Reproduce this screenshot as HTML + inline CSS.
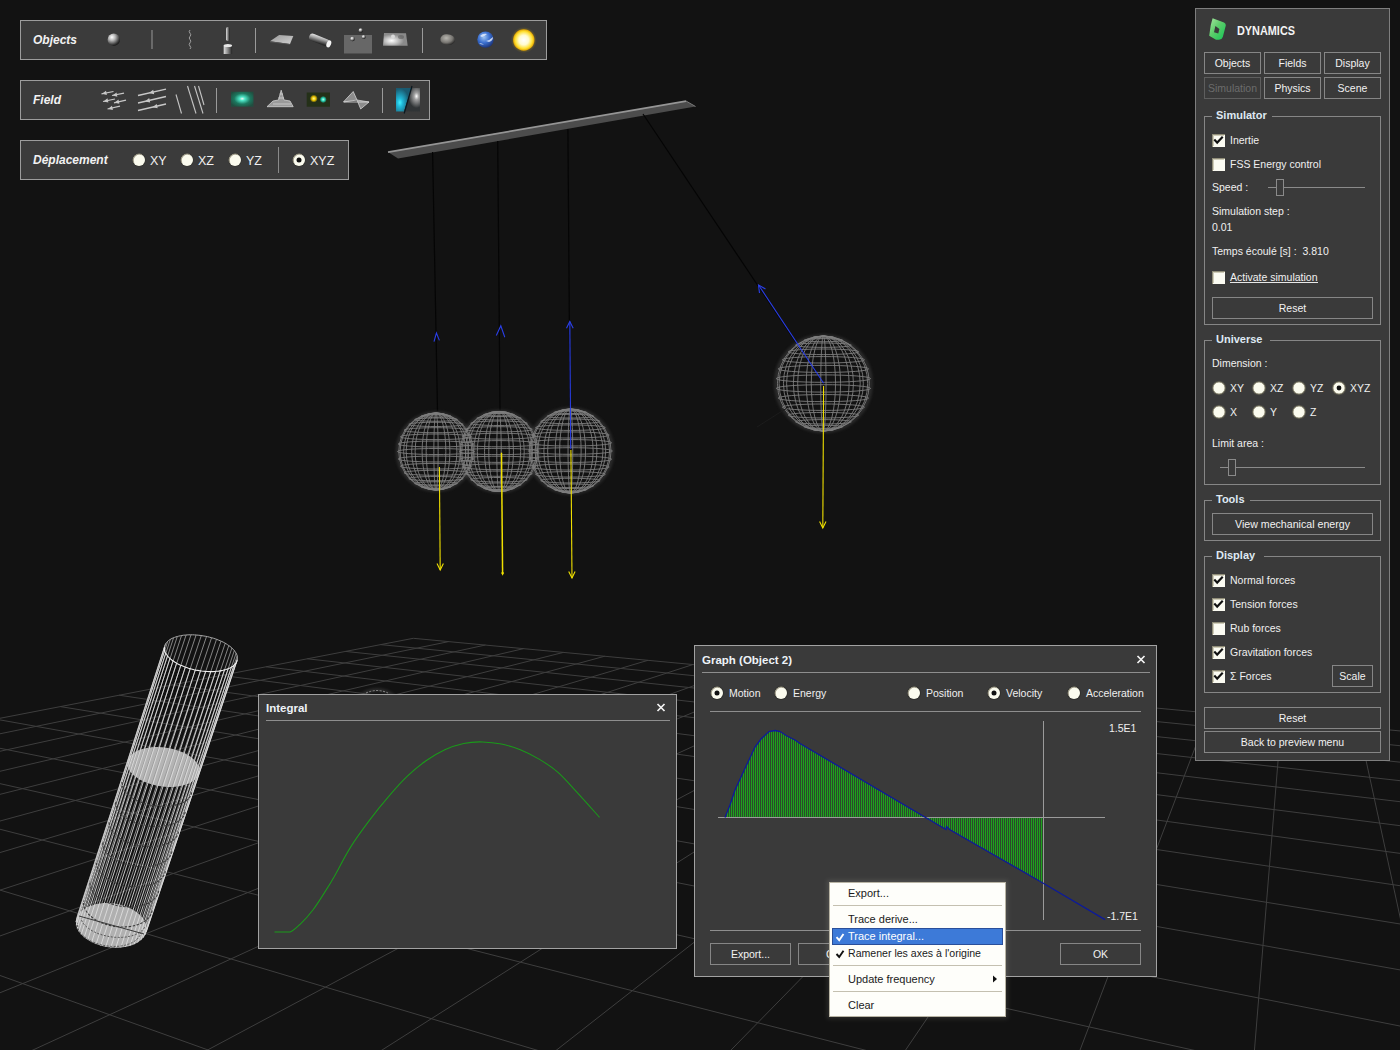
<!DOCTYPE html>
<html><head><meta charset="utf-8">
<style>
*{margin:0;padding:0}
html,body{width:1400px;height:1050px;overflow:hidden;background:#121212}
svg{position:absolute;left:0;top:0;display:block}
text{font-family:"Liberation Sans",sans-serif;white-space:pre}
</style></head><body>
<svg width="1400" height="1050" viewBox="0 0 1400 1050">
<rect width="1400" height="1050" fill="#121212"/>
<path d="M1527.5 742.9L11927.7 13509.7M1440.6 734.7L8031.1 13509.0M1358.8 727.1L4134.6 13508.2M1281.4 719.8L238.1 13507.4M1208.3 712.9L-3658.5 13506.7M1139.0 706.4L-7555.0 13505.9M1073.2 700.2L-5395.7 7313.8M1010.7 694.4L-3692.8 4377.5M951.3 688.8L-3012.0 3203.6M894.7 683.5L-2645.4 2571.6M840.8 678.4L-2416.4 2176.7M789.3 673.6L-2259.7 1906.5M740.1 669.0L-2145.7 1710.0M693.0 664.5L-2059.1 1560.6M648.0 660.3L-1991.1 1443.3M604.8 656.2L-1936.2 1348.7M563.4 652.4L-1891.0 1270.8M523.6 648.6L-1853.2 1205.5M485.4 645.0L-1821.0 1150.0M448.7 641.6L-1793.3 1102.2M413.3 638.3L-1769.2 1060.7M1527.5 742.9L413.3 638.3M1541.1 759.7L380.6 644.6M1556.5 778.6L345.3 651.4M1574.1 800.1L307.3 658.8M1594.2 824.8L266.1 666.8M1617.5 853.4L221.3 675.4M1644.9 887.0L172.5 684.9M1677.5 927.0L119.1 695.2M1716.9 975.4L60.4 706.6M1765.6 1035.2L-4.5 719.1M1827.2 1110.8L-76.5 733.1M1907.7 1209.7L-156.9 748.6M2017.5 1344.4L-247.3 766.1M2175.7 1538.6L-349.6 785.9M2423.8 1843.2L-466.4 808.5M2868.9 2389.6L-600.9 834.6M3899.4 3654.5L-757.6 864.9M8889.7 9780.4L-942.4 900.7M5683.9 13508.5L-1163.7 943.5M-1651.3 13507.1L-1433.3 995.7M-8986.6 13505.7L-1769.2 1060.7" stroke="#3e3e3e" stroke-width="1" fill="none"/>
<path d="M199.3 772.1 L198.9 774.0 L198.0 776.0 L196.7 777.8 L195.1 779.5 L193.2 781.0 L190.9 782.4 L188.3 783.7 L185.4 784.7 L182.3 785.6 L179.0 786.2 L175.5 786.7 L171.9 786.9 L168.2 786.9 L164.5 786.7 L160.7 786.3 L156.9 785.7 L153.3 784.8 L149.7 783.8 L146.3 782.6 L143.1 781.2 L140.1 779.7 L137.3 778.0 L134.9 776.2 L132.7 774.3 L130.9 772.3 L129.5 770.2 L128.4 768.2 L127.7 766.1 L127.4 764.0 L127.5 761.9 L127.9 760.0 L128.8 758.0 L130.1 756.2 L131.7 754.5 L133.6 753.0 L135.9 751.6 L138.5 750.3 L141.4 749.3 L144.5 748.4 L147.8 747.8 L151.3 747.3 L154.9 747.1 L158.6 747.1 L162.3 747.3 L166.1 747.7 L169.9 748.3 L173.5 749.2 L177.1 750.2 L180.5 751.4 L183.7 752.8 L186.7 754.3 L189.5 756.0 L191.9 757.8 L194.1 759.7 L195.9 761.7 L197.3 763.8 L198.4 765.8 L199.1 767.9 L199.4 770.0 L199.3 772.1Z" fill="#b4b4b4"/>
<path d="M146.6 930.4 L146.0 932.6 L145.1 934.8 L143.9 936.8 L142.3 938.8 L140.3 940.6 L138.0 942.2 L135.4 943.7 L132.6 944.9 L129.5 945.9 L126.3 946.7 L122.8 947.3 L119.3 947.7 L115.6 947.7 L111.9 947.6 L108.2 947.2 L104.6 946.5 L101.0 945.7 L97.5 944.6 L94.2 943.3 L91.0 941.8 L88.1 940.1 L85.4 938.3 L83.1 936.3 L81.0 934.2 L79.2 932.0 L77.8 929.7 L76.8 927.4 L76.2 925.1 L75.9 922.7 L76.0 920.4 L76.6 918.2 L77.5 916.0 L78.7 914.0 L80.3 912.0 L82.3 910.2 L84.6 908.6 L87.2 907.1 L90.0 905.9 L93.1 904.9 L96.3 904.1 L99.8 903.5 L103.3 903.1 L107.0 903.1 L110.7 903.2 L114.4 903.6 L118.0 904.3 L121.6 905.1 L125.1 906.2 L128.4 907.5 L131.6 909.0 L134.5 910.7 L137.2 912.5 L139.5 914.5 L141.6 916.6 L143.4 918.8 L144.8 921.1 L145.8 923.4 L146.4 925.7 L146.7 928.1 L146.6 930.4Z" fill="#b0b0b0"/>
<path d="M164.8 645.6L76.4 918.9M165.9 643.3L77.5 915.9M167.8 641.2L79.3 913.1M170.4 639.3L81.8 910.6M173.6 637.7L84.9 908.4M177.3 636.5L88.5 906.5M181.5 635.6L92.6 905.0M186.1 635.0L97.1 903.9M191.0 634.8L101.8 903.3M196.1 635.0L106.8 903.1M201.3 635.6L111.8 903.3M206.5 636.5L116.9 904.0M211.6 637.7L121.8 905.2M216.5 639.3L126.5 906.7M221.0 641.2L130.9 908.7M225.2 643.3L134.9 910.9M228.8 645.6L138.4 913.5M231.9 648.0L141.4 916.3M234.3 650.6L143.7 919.3M236.1 653.2L145.4 922.4M237.2 655.8L146.4 925.6M237.5 658.4L146.7 928.8" stroke="#9a9a9a" stroke-width="0.85" fill="none"/>
<path d="M237.0 660.8L146.2 931.9M235.9 663.1L145.1 934.9M234.0 665.2L143.3 937.7M231.4 667.1L140.8 940.2M228.2 668.7L137.7 942.4M224.5 669.9L134.1 944.3M220.3 670.8L130.0 945.8M215.7 671.4L125.5 946.9M210.8 671.6L120.8 947.5M205.7 671.4L115.8 947.7M200.5 670.8L110.8 947.5M195.3 669.9L105.7 946.8M190.2 668.7L100.8 945.6M185.3 667.1L96.1 944.1M180.8 665.2L91.7 942.1M176.6 663.1L87.7 939.9M173.0 660.8L84.2 937.3M169.9 658.4L81.2 934.5M167.5 655.8L78.9 931.5M165.7 653.2L77.2 928.4M164.6 650.6L76.2 925.2M164.3 648.0L75.9 922.0" stroke="#dedede" stroke-width="0.9" fill="none"/>
<path d="M191.7 792.3 L191.5 793.3 L191.2 794.3 L190.8 795.2 L190.3 796.1 L189.7 797.0 L189.1 797.9 L188.3 798.7 L187.5 799.5 L186.6 800.3 L185.6 801.0 L184.5 801.7 L183.3 802.4 L182.1 803.0 L180.8 803.5 L179.4 804.1 L178.0 804.5 L176.5 804.9 L174.9 805.3 L173.4 805.6 L171.7 805.9 L170.0 806.1 L168.3 806.3 L166.6 806.4 L164.8 806.5 L163.0 806.5 L161.2 806.4 L159.4 806.3 L157.6 806.2 L155.8 805.9 L153.9 805.7 L152.1 805.4 L150.3 805.0 L148.5 804.6 L146.8 804.1 L145.0 803.6 L143.3 803.1 L141.7 802.4 L140.0 801.8 L138.5 801.1 L136.9 800.4 L135.5 799.6 L134.1 798.8 L132.7 798.0 L131.4 797.1 L130.2 796.2 L129.1 795.3 L128.0 794.4 L127.0 793.4 L126.1 792.5 L125.3 791.5 L124.6 790.5 L123.9 789.4 L123.4 788.4 L122.9 787.4 L122.5 786.4 L122.3 785.3 L122.1 784.3 L122.0 783.3 L122.0 782.3 L122.1 781.3" fill="none" stroke="#3a3a3a" stroke-width="1.1" stroke-dasharray="2.5 1.5"/>
<path d="M185.1 812.0 L184.9 813.0 L184.6 814.0 L184.2 815.0 L183.7 815.9 L183.2 816.8 L182.5 817.7 L181.7 818.5 L180.9 819.4 L180.0 820.1 L179.0 820.9 L177.9 821.6 L176.7 822.3 L175.5 822.9 L174.2 823.5 L172.8 824.0 L171.4 824.5 L169.9 824.9 L168.4 825.3 L166.8 825.7 L165.2 825.9 L163.5 826.2 L161.8 826.3 L160.0 826.5 L158.3 826.5 L156.5 826.6 L154.7 826.5 L152.9 826.4 L151.1 826.3 L149.2 826.1 L147.4 825.8 L145.6 825.5 L143.8 825.1 L142.0 824.7 L140.3 824.3 L138.5 823.7 L136.8 823.2 L135.2 822.6 L133.6 821.9 L132.0 821.2 L130.5 820.5 L129.0 819.8 L127.6 819.0 L126.2 818.1 L125.0 817.2 L123.7 816.3 L122.6 815.4 L121.5 814.5 L120.6 813.5 L119.7 812.5 L118.9 811.5 L118.1 810.5 L117.5 809.5 L116.9 808.4 L116.5 807.4 L116.1 806.3 L115.8 805.3 L115.7 804.3 L115.6 803.2 L115.6 802.2 L115.7 801.2" fill="none" stroke="#3a3a3a" stroke-width="1.1" stroke-dasharray="2.5 1.5"/>
<path d="M178.5 831.7 L178.3 832.7 L178.0 833.7 L177.6 834.7 L177.1 835.7 L176.6 836.6 L175.9 837.5 L175.1 838.4 L174.3 839.2 L173.4 840.0 L172.4 840.8 L171.3 841.5 L170.1 842.2 L168.9 842.8 L167.6 843.4 L166.2 844.0 L164.8 844.5 L163.3 844.9 L161.8 845.3 L160.2 845.7 L158.6 846.0 L156.9 846.2 L155.2 846.4 L153.5 846.5 L151.7 846.6 L150.0 846.6 L148.2 846.6 L146.3 846.5 L144.5 846.4 L142.7 846.2 L140.9 845.9 L139.1 845.6 L137.3 845.3 L135.5 844.9 L133.8 844.4 L132.0 843.9 L130.3 843.3 L128.7 842.7 L127.1 842.1 L125.5 841.4 L124.0 840.7 L122.5 839.9 L121.1 839.1 L119.8 838.2 L118.5 837.4 L117.3 836.4 L116.2 835.5 L115.1 834.6 L114.1 833.6 L113.2 832.6 L112.4 831.6 L111.7 830.5 L111.0 829.5 L110.5 828.4 L110.0 827.4 L109.7 826.3 L109.4 825.3 L109.2 824.2 L109.1 823.2 L109.2 822.1 L109.3 821.1" fill="none" stroke="#3a3a3a" stroke-width="1.1" stroke-dasharray="2.5 1.5"/>
<path d="M171.9 851.4 L171.7 852.4 L171.4 853.5 L171.0 854.5 L170.5 855.4 L170.0 856.4 L169.3 857.3 L168.5 858.2 L167.7 859.0 L166.8 859.9 L165.8 860.6 L164.7 861.4 L163.6 862.1 L162.3 862.7 L161.0 863.4 L159.7 863.9 L158.3 864.4 L156.8 864.9 L155.2 865.3 L153.7 865.7 L152.0 866.0 L150.4 866.2 L148.7 866.4 L147.0 866.6 L145.2 866.7 L143.4 866.7 L141.6 866.7 L139.8 866.6 L138.0 866.5 L136.2 866.3 L134.4 866.0 L132.6 865.7 L130.8 865.4 L129.0 865.0 L127.3 864.5 L125.5 864.0 L123.8 863.5 L122.2 862.9 L120.6 862.2 L119.0 861.5 L117.5 860.8 L116.0 860.0 L114.6 859.2 L113.3 858.3 L112.0 857.5 L110.8 856.5 L109.7 855.6 L108.6 854.6 L107.7 853.6 L106.8 852.6 L106.0 851.6 L105.2 850.6 L104.6 849.5 L104.1 848.4 L103.6 847.4 L103.2 846.3 L103.0 845.2 L102.8 844.2 L102.7 843.1 L102.7 842.0 L102.8 841.0" fill="none" stroke="#3a3a3a" stroke-width="1.1" stroke-dasharray="2.5 1.5"/>
<path d="M165.3 871.1 L165.1 872.2 L164.8 873.2 L164.4 874.2 L163.9 875.2 L163.4 876.2 L162.7 877.1 L161.9 878.0 L161.1 878.9 L160.2 879.7 L159.2 880.5 L158.1 881.3 L157.0 882.0 L155.7 882.7 L154.5 883.3 L153.1 883.9 L151.7 884.4 L150.2 884.9 L148.7 885.3 L147.1 885.7 L145.5 886.0 L143.8 886.3 L142.1 886.5 L140.4 886.7 L138.7 886.8 L136.9 886.8 L135.1 886.8 L133.3 886.7 L131.5 886.6 L129.7 886.4 L127.9 886.2 L126.1 885.9 L124.3 885.5 L122.5 885.1 L120.8 884.7 L119.0 884.2 L117.4 883.6 L115.7 883.0 L114.1 882.3 L112.5 881.6 L111.0 880.9 L109.6 880.1 L108.2 879.3 L106.8 878.5 L105.6 877.6 L104.4 876.6 L103.2 875.7 L102.2 874.7 L101.2 873.7 L100.3 872.7 L99.5 871.7 L98.8 870.6 L98.2 869.5 L97.6 868.5 L97.2 867.4 L96.8 866.3 L96.5 865.2 L96.4 864.1 L96.3 863.0 L96.3 862.0 L96.4 860.9" fill="none" stroke="#3a3a3a" stroke-width="1.1" stroke-dasharray="2.5 1.5"/>
<path d="M158.7 890.8 L158.5 891.9 L158.2 892.9 L157.8 894.0 L157.3 895.0 L156.8 895.9 L156.1 896.9 L155.3 897.8 L154.5 898.7 L153.6 899.6 L152.6 900.4 L151.5 901.2 L150.4 901.9 L149.2 902.6 L147.9 903.2 L146.5 903.8 L145.1 904.4 L143.6 904.9 L142.1 905.3 L140.5 905.7 L138.9 906.0 L137.3 906.3 L135.6 906.6 L133.9 906.7 L132.1 906.8 L130.3 906.9 L128.6 906.9 L126.8 906.8 L125.0 906.7 L123.2 906.5 L121.3 906.3 L119.6 906.0 L117.8 905.7 L116.0 905.3 L114.3 904.8 L112.6 904.3 L110.9 903.7 L109.2 903.1 L107.6 902.5 L106.1 901.8 L104.6 901.0 L103.1 900.3 L101.7 899.4 L100.4 898.6 L99.1 897.7 L97.9 896.7 L96.8 895.8 L95.7 894.8 L94.8 893.8 L93.9 892.8 L93.1 891.7 L92.4 890.6 L91.7 889.6 L91.2 888.5 L90.7 887.4 L90.4 886.3 L90.1 885.2 L89.9 884.1 L89.8 883.0 L89.9 881.9 L90.0 880.8" fill="none" stroke="#3a3a3a" stroke-width="1.1" stroke-dasharray="2.5 1.5"/>
<path d="M152.1 910.5 L151.9 911.6 L151.6 912.7 L151.2 913.7 L150.7 914.7 L150.2 915.7 L149.5 916.7 L148.8 917.6 L147.9 918.5 L147.0 919.4 L146.0 920.3 L144.9 921.0 L143.8 921.8 L142.6 922.5 L141.3 923.2 L140.0 923.8 L138.5 924.3 L137.1 924.9 L135.6 925.3 L134.0 925.7 L132.4 926.1 L130.7 926.4 L129.0 926.6 L127.3 926.8 L125.6 926.9 L123.8 927.0 L122.0 927.0 L120.2 926.9 L118.4 926.8 L116.6 926.6 L114.8 926.4 L113.0 926.1 L111.3 925.8 L109.5 925.4 L107.8 924.9 L106.1 924.4 L104.4 923.9 L102.8 923.3 L101.2 922.6 L99.6 921.9 L98.1 921.2 L96.6 920.4 L95.3 919.6 L93.9 918.7 L92.7 917.8 L91.5 916.8 L90.3 915.9 L89.3 914.9 L88.3 913.9 L87.4 912.8 L86.6 911.8 L85.9 910.7 L85.3 909.6 L84.7 908.5 L84.3 907.4 L83.9 906.2 L83.7 905.1 L83.5 904.0 L83.4 902.9 L83.4 901.8 L83.5 900.7" fill="none" stroke="#3a3a3a" stroke-width="1.1" stroke-dasharray="2.5 1.5"/>
<path d="M237.3 659.6 L237.1 660.5 L236.8 661.4 L236.4 662.2 L235.9 663.1 L235.3 663.9 L234.6 664.6 L233.8 665.4 L233.0 666.1 L232.0 666.7 L230.9 667.4 L229.8 668.0 L228.6 668.5 L227.3 669.0 L225.9 669.5 L224.5 669.9 L223.0 670.3 L221.5 670.6 L219.9 670.9 L218.2 671.2 L216.5 671.3 L214.7 671.5 L212.9 671.6 L211.1 671.6 L209.3 671.6 L207.4 671.5 L205.5 671.4 L203.6 671.2 L201.7 671.0 L199.8 670.7 L197.9 670.4 L196.0 670.1 L194.1 669.7 L192.2 669.2 L190.4 668.7 L188.5 668.2 L186.7 667.6 L185.0 667.0 L183.3 666.3 L181.6 665.6 L180.0 664.9 L178.5 664.2 L177.0 663.4 L175.6 662.6 L174.3 661.7 L173.0 660.8 L171.8 660.0 L170.7 659.1 L169.6 658.1 L168.7 657.2 L167.8 656.3 L167.1 655.3 L166.4 654.3 L165.8 653.4 L165.3 652.4 L164.9 651.5 L164.6 650.5 L164.4 649.6 L164.3 648.6 L164.4 647.7 L164.5 646.8" fill="none" stroke="#f0f0f0" stroke-width="1.1"/>
<path d="M164.5 646.8 L164.7 645.9 L165.0 645.0 L165.4 644.2 L165.9 643.3 L166.5 642.5 L167.2 641.8 L168.0 641.0 L168.8 640.3 L169.8 639.7 L170.9 639.0 L172.0 638.4 L173.2 637.9 L174.5 637.4 L175.9 636.9 L177.3 636.5 L178.8 636.1 L180.3 635.8 L181.9 635.5 L183.6 635.2 L185.3 635.1 L187.1 634.9 L188.9 634.8 L190.7 634.8 L192.5 634.8 L194.4 634.9 L196.3 635.0 L198.2 635.2 L200.1 635.4 L202.0 635.7 L203.9 636.0 L205.8 636.3 L207.7 636.7 L209.6 637.2 L211.4 637.7 L213.3 638.2 L215.1 638.8 L216.8 639.4 L218.5 640.1 L220.2 640.8 L221.8 641.5 L223.3 642.2 L224.8 643.0 L226.2 643.8 L227.5 644.7 L228.8 645.6 L230.0 646.4 L231.1 647.3 L232.2 648.3 L233.1 649.2 L234.0 650.1 L234.7 651.1 L235.4 652.1 L236.0 653.0 L236.5 654.0 L236.9 654.9 L237.2 655.9 L237.4 656.8 L237.5 657.8 L237.4 658.7 L237.3 659.6" fill="none" stroke="#a8a8a8" stroke-width="1"/>
<path d="M144.6 927.3 L144.2 928.1 L143.7 928.8 L143.1 929.5 L142.5 930.1 L141.8 930.8 L141.0 931.4 L140.2 932.0 L139.4 932.6 L138.5 933.1 L137.5 933.7 L136.5 934.1 L135.4 934.6 L134.3 935.0 L133.1 935.4 L131.9 935.8 L130.7 936.1 L129.4 936.4 L128.1 936.6 L126.8 936.9 L125.4 937.1 L124.0 937.2 L122.6 937.3 L121.2 937.4 L119.7 937.4 L118.3 937.4 L116.8 937.4 L115.3 937.3 L113.8 937.2 L112.3 937.0 L110.9 936.8 L109.4 936.6 L107.9 936.3 L106.4 936.0 L105.0 935.7 L103.6 935.3 L102.2 934.9 L100.8 934.5 L99.4 934.0 L98.1 933.6 L96.8 933.0 L95.5 932.5 L94.3 931.9 L93.1 931.3 L92.0 930.7 L90.9 930.0 L89.8 929.3 L88.8 928.6 L87.9 927.9 L87.0 927.2 L86.1 926.4 L85.3 925.7 L84.6 924.9 L83.9 924.1 L83.3 923.3 L82.8 922.5 L82.3 921.7 L81.9 920.9 L81.5 920.0 L81.2 919.2 L81.0 918.4" fill="none" stroke="#555" stroke-width="1" stroke-dasharray="2 1.5"/>
<path d="M141.0 931.9 L140.8 932.8 L140.6 933.8 L140.2 934.7 L139.8 935.6 L139.3 936.5 L138.7 937.4 L138.0 938.2 L137.2 939.0 L136.4 939.8 L135.5 940.5 L134.5 941.2 L133.4 941.9 L132.3 942.5 L131.1 943.1 L129.9 943.6 L128.6 944.1 L127.2 944.6 L125.8 945.0 L124.4 945.4 L122.9 945.7 L121.4 945.9 L119.8 946.1 L118.2 946.3 L116.6 946.4 L115.0 946.4 L113.4 946.4 L111.7 946.4 L110.0 946.3 L108.4 946.1 L106.7 945.9 L105.0 945.7 L103.4 945.4 L101.8 945.0 L100.2 944.6 L98.6 944.1 L97.0 943.6 L95.5 943.1 L94.0 942.5 L92.6 941.9 L91.2 941.2 L89.8 940.5 L88.5 939.8 L87.3 939.0 L86.1 938.2 L85.0 937.3 L84.0 936.5 L83.0 935.6 L82.1 934.7 L81.3 933.7 L80.5 932.8 L79.8 931.8 L79.3 930.9 L78.7 929.9 L78.3 928.9 L78.0 927.9 L77.7 926.9 L77.6 925.9 L77.5 924.9 L77.5 923.9 L77.6 922.9" fill="none" stroke="#555" stroke-width="1" stroke-dasharray="2 1.5"/>
<path d="M388 152 L686 101 L695.5 106.5 L398 158.5 Z" fill="#4c4c4c"/>
<path d="M388 152.2 L686 101.2" stroke="#959595" stroke-width="1.8"/>
<path d="M686 101 L695.5 106.5" stroke="#7a7a7a" stroke-width="1"/>
<path d="M432.6 152 L437.5 411 M497.7 141 L500 410 M567.9 129 L570 409 M643 114 L823.4 383.5" stroke="#050505" stroke-width="1.2"/>
<defs><filter id="blur2" x="-20%" y="-20%" width="140%" height="140%"><feGaussianBlur stdDeviation="1.5"/></filter></defs>
<circle cx="436" cy="451.5" r="38.5" fill="none" stroke="#606060" stroke-width="3" opacity="0.4" filter="url(#blur2)"/>
<path d="M428.5 413.9A7.5 0.59 0 0 0 443.5 413.9A7.5 0.59 0 0 0 428.5 413.9M421.3 416.0A14.7 1.16 0 0 0 450.7 416.0A14.7 1.16 0 0 0 421.3 416.0M414.6 419.6A21.4 1.68 0 0 0 457.4 419.6A21.4 1.68 0 0 0 414.6 419.6M408.8 424.4A27.2 2.14 0 0 0 463.2 424.4A27.2 2.14 0 0 0 408.8 424.4M404.0 430.2A32.0 2.51 0 0 0 468.0 430.2A32.0 2.51 0 0 0 404.0 430.2M400.4 436.8A35.6 2.79 0 0 0 471.6 436.8A35.6 2.79 0 0 0 400.4 436.8M398.2 444.0A37.8 2.96 0 0 0 473.8 444.0A37.8 2.96 0 0 0 398.2 444.0M397.5 451.5A38.5 3.02 0 0 0 474.5 451.5A38.5 3.02 0 0 0 397.5 451.5M398.2 459.0A37.8 2.96 0 0 0 473.8 459.0A37.8 2.96 0 0 0 398.2 459.0M400.4 466.2A35.6 2.79 0 0 0 471.6 466.2A35.6 2.79 0 0 0 400.4 466.2M404.0 472.8A32.0 2.51 0 0 0 468.0 472.8A32.0 2.51 0 0 0 404.0 472.8M408.8 478.6A27.2 2.14 0 0 0 463.2 478.6A27.2 2.14 0 0 0 408.8 478.6M414.6 483.4A21.4 1.68 0 0 0 457.4 483.4A21.4 1.68 0 0 0 414.6 483.4M421.3 487.0A14.7 1.16 0 0 0 450.7 487.0A14.7 1.16 0 0 0 421.3 487.0M428.5 489.1A7.5 0.59 0 0 0 443.5 489.1A7.5 0.59 0 0 0 428.5 489.1M436.0 413.0A37.22 38.5 0 0 0 436.0 490.0A37.22 38.5 0 0 0 436.0 413.0M436.0 413.0A32.36 38.5 0 0 0 436.0 490.0A32.36 38.5 0 0 0 436.0 413.0M436.0 413.0A24.33 38.5 0 0 0 436.0 490.0A24.33 38.5 0 0 0 436.0 413.0M436.0 413.0A13.92 38.5 0 0 0 436.0 490.0A13.92 38.5 0 0 0 436.0 413.0M436.0 413.0A2.15 38.5 0 0 0 436.0 490.0A2.15 38.5 0 0 0 436.0 413.0M436.0 413.0A9.83 38.5 0 0 0 436.0 490.0A9.83 38.5 0 0 0 436.0 413.0M436.0 413.0A20.86 38.5 0 0 0 436.0 490.0A20.86 38.5 0 0 0 436.0 413.0M436.0 413.0A29.84 38.5 0 0 0 436.0 490.0A29.84 38.5 0 0 0 436.0 413.0M436.0 413.0A35.89 38.5 0 0 0 436.0 490.0A35.89 38.5 0 0 0 436.0 413.0" fill="none" stroke="#7e7e7e" stroke-width="0.9"/>
<circle cx="499" cy="451.5" r="40" fill="none" stroke="#606060" stroke-width="3" opacity="0.4" filter="url(#blur2)"/>
<path d="M491.2 412.4A7.8 0.61 0 0 0 506.8 412.4A7.8 0.61 0 0 0 491.2 412.4M483.7 414.7A15.3 1.20 0 0 0 514.3 414.7A15.3 1.20 0 0 0 483.7 414.7M476.8 418.3A22.2 1.74 0 0 0 521.2 418.3A22.2 1.74 0 0 0 476.8 418.3M470.7 423.3A28.3 2.22 0 0 0 527.3 423.3A28.3 2.22 0 0 0 470.7 423.3M465.7 429.3A33.3 2.61 0 0 0 532.3 429.3A33.3 2.61 0 0 0 465.7 429.3M462.0 436.2A37.0 2.90 0 0 0 536.0 436.2A37.0 2.90 0 0 0 462.0 436.2M459.8 443.7A39.2 3.08 0 0 0 538.2 443.7A39.2 3.08 0 0 0 459.8 443.7M459.0 451.5A40.0 3.14 0 0 0 539.0 451.5A40.0 3.14 0 0 0 459.0 451.5M459.8 459.3A39.2 3.08 0 0 0 538.2 459.3A39.2 3.08 0 0 0 459.8 459.3M462.0 466.8A37.0 2.90 0 0 0 536.0 466.8A37.0 2.90 0 0 0 462.0 466.8M465.7 473.7A33.3 2.61 0 0 0 532.3 473.7A33.3 2.61 0 0 0 465.7 473.7M470.7 479.7A28.3 2.22 0 0 0 527.3 479.7A28.3 2.22 0 0 0 470.7 479.7M476.8 484.7A22.2 1.74 0 0 0 521.2 484.7A22.2 1.74 0 0 0 476.8 484.7M483.7 488.3A15.3 1.20 0 0 0 514.3 488.3A15.3 1.20 0 0 0 483.7 488.3M491.2 490.6A7.8 0.61 0 0 0 506.8 490.6A7.8 0.61 0 0 0 491.2 490.6M499.0 411.5A38.67 40.0 0 0 0 499.0 491.5A38.67 40.0 0 0 0 499.0 411.5M499.0 411.5A33.62 40.0 0 0 0 499.0 491.5A33.62 40.0 0 0 0 499.0 411.5M499.0 411.5A25.28 40.0 0 0 0 499.0 491.5A25.28 40.0 0 0 0 499.0 411.5M499.0 411.5A14.46 40.0 0 0 0 499.0 491.5A14.46 40.0 0 0 0 499.0 411.5M499.0 411.5A2.23 40.0 0 0 0 499.0 491.5A2.23 40.0 0 0 0 499.0 411.5M499.0 411.5A10.22 40.0 0 0 0 499.0 491.5A10.22 40.0 0 0 0 499.0 411.5M499.0 411.5A21.67 40.0 0 0 0 499.0 491.5A21.67 40.0 0 0 0 499.0 411.5M499.0 411.5A31.00 40.0 0 0 0 499.0 491.5A31.00 40.0 0 0 0 499.0 411.5M499.0 411.5A37.29 40.0 0 0 0 499.0 491.5A37.29 40.0 0 0 0 499.0 411.5" fill="none" stroke="#7e7e7e" stroke-width="0.9"/>
<circle cx="570.4" cy="451" r="42" fill="none" stroke="#606060" stroke-width="3" opacity="0.4" filter="url(#blur2)"/>
<path d="M562.2 409.9A8.2 0.64 0 0 0 578.6 409.9A8.2 0.64 0 0 0 562.2 409.9M554.3 412.3A16.1 1.26 0 0 0 586.5 412.3A16.1 1.26 0 0 0 554.3 412.3M547.1 416.2A23.3 1.83 0 0 0 593.7 416.2A23.3 1.83 0 0 0 547.1 416.2M540.7 421.4A29.7 2.33 0 0 0 600.1 421.4A29.7 2.33 0 0 0 540.7 421.4M535.5 427.7A34.9 2.74 0 0 0 605.3 427.7A34.9 2.74 0 0 0 535.5 427.7M531.6 435.0A38.8 3.04 0 0 0 609.2 435.0A38.8 3.04 0 0 0 531.6 435.0M529.2 442.8A41.2 3.23 0 0 0 611.6 442.8A41.2 3.23 0 0 0 529.2 442.8M528.4 451.0A42.0 3.30 0 0 0 612.4 451.0A42.0 3.30 0 0 0 528.4 451.0M529.2 459.2A41.2 3.23 0 0 0 611.6 459.2A41.2 3.23 0 0 0 529.2 459.2M531.6 467.0A38.8 3.04 0 0 0 609.2 467.0A38.8 3.04 0 0 0 531.6 467.0M535.5 474.3A34.9 2.74 0 0 0 605.3 474.3A34.9 2.74 0 0 0 535.5 474.3M540.7 480.6A29.7 2.33 0 0 0 600.1 480.6A29.7 2.33 0 0 0 540.7 480.6M547.1 485.8A23.3 1.83 0 0 0 593.7 485.8A23.3 1.83 0 0 0 547.1 485.8M554.3 489.7A16.1 1.26 0 0 0 586.5 489.7A16.1 1.26 0 0 0 554.3 489.7M562.2 492.1A8.2 0.64 0 0 0 578.6 492.1A8.2 0.64 0 0 0 562.2 492.1M570.4 409.0A40.61 42.0 0 0 0 570.4 493.0A40.61 42.0 0 0 0 570.4 409.0M570.4 409.0A35.30 42.0 0 0 0 570.4 493.0A35.30 42.0 0 0 0 570.4 409.0M570.4 409.0A26.55 42.0 0 0 0 570.4 493.0A26.55 42.0 0 0 0 570.4 409.0M570.4 409.0A15.19 42.0 0 0 0 570.4 493.0A15.19 42.0 0 0 0 570.4 409.0M570.4 409.0A2.34 42.0 0 0 0 570.4 493.0A2.34 42.0 0 0 0 570.4 409.0M570.4 409.0A10.73 42.0 0 0 0 570.4 493.0A10.73 42.0 0 0 0 570.4 409.0M570.4 409.0A22.75 42.0 0 0 0 570.4 493.0A22.75 42.0 0 0 0 570.4 409.0M570.4 409.0A32.55 42.0 0 0 0 570.4 493.0A32.55 42.0 0 0 0 570.4 409.0M570.4 409.0A39.16 42.0 0 0 0 570.4 493.0A39.16 42.0 0 0 0 570.4 409.0" fill="none" stroke="#7e7e7e" stroke-width="0.9"/>
<circle cx="823.4" cy="383.5" r="47.5" fill="none" stroke="#606060" stroke-width="3" opacity="0.4" filter="url(#blur2)"/>
<path d="M813.5 337.2A9.9 0.77 0 0 0 833.3 337.2A9.9 0.77 0 0 0 813.5 337.2M804.1 340.2A19.3 1.52 0 0 0 842.7 340.2A19.3 1.52 0 0 0 804.1 340.2M795.5 345.2A27.9 2.19 0 0 0 851.3 345.2A27.9 2.19 0 0 0 795.5 345.2M788.1 351.8A35.3 2.77 0 0 0 858.7 351.8A35.3 2.77 0 0 0 788.1 351.8M782.3 359.8A41.1 3.23 0 0 0 864.5 359.8A41.1 3.23 0 0 0 782.3 359.8M778.2 368.9A45.2 3.54 0 0 0 868.6 368.9A45.2 3.54 0 0 0 778.2 368.9M776.2 378.6A47.2 3.71 0 0 0 870.6 378.6A47.2 3.71 0 0 0 776.2 378.6M776.2 388.4A47.2 3.71 0 0 0 870.6 388.4A47.2 3.71 0 0 0 776.2 388.4M778.2 398.1A45.2 3.54 0 0 0 868.6 398.1A45.2 3.54 0 0 0 778.2 398.1M782.3 407.2A41.1 3.23 0 0 0 864.5 407.2A41.1 3.23 0 0 0 782.3 407.2M788.1 415.2A35.3 2.77 0 0 0 858.7 415.2A35.3 2.77 0 0 0 788.1 415.2M795.5 421.8A27.9 2.19 0 0 0 851.3 421.8A27.9 2.19 0 0 0 795.5 421.8M804.1 426.8A19.3 1.52 0 0 0 842.7 426.8A19.3 1.52 0 0 0 804.1 426.8M813.5 429.8A9.9 0.77 0 0 0 833.3 429.8A9.9 0.77 0 0 0 813.5 429.8M823.4 336.0A45.92 47.5 0 0 0 823.4 431.0A45.92 47.5 0 0 0 823.4 336.0M823.4 336.0A39.93 47.5 0 0 0 823.4 431.0A39.93 47.5 0 0 0 823.4 336.0M823.4 336.0A30.02 47.5 0 0 0 823.4 431.0A30.02 47.5 0 0 0 823.4 336.0M823.4 336.0A17.18 47.5 0 0 0 823.4 431.0A17.18 47.5 0 0 0 823.4 336.0M823.4 336.0A2.65 47.5 0 0 0 823.4 431.0A2.65 47.5 0 0 0 823.4 336.0M823.4 336.0A12.13 47.5 0 0 0 823.4 431.0A12.13 47.5 0 0 0 823.4 336.0M823.4 336.0A25.73 47.5 0 0 0 823.4 431.0A25.73 47.5 0 0 0 823.4 336.0M823.4 336.0A36.81 47.5 0 0 0 823.4 431.0A36.81 47.5 0 0 0 823.4 336.0M823.4 336.0A44.29 47.5 0 0 0 823.4 431.0A44.29 47.5 0 0 0 823.4 336.0" fill="none" stroke="#7e7e7e" stroke-width="0.9"/>
<path d="M439.4 467 L440.2 570" stroke="#f0e000" stroke-width="1.1"/>
<path d="M437.0 563.6 L440.2 570 L443.4 563.6" fill="none" stroke="#f0e000" stroke-width="1.1"/>
<path d="M501.5 452.7 L502.6 574" stroke="#f0e000" stroke-width="1.5"/>
<path d="M501.8 572.4 L502.6 574 L503.4 572.4" fill="none" stroke="#f0e000" stroke-width="1.5"/>
<path d="M570.9 450 L572 578" stroke="#f0e000" stroke-width="1.1"/>
<path d="M568.7 571.6 L572 578 L575.1 571.6" fill="none" stroke="#f0e000" stroke-width="1.1"/>
<path d="M823.6 386 L822.8 528" stroke="#f0e000" stroke-width="1.1"/>
<path d="M819.6 521.6 L822.8 528 L826.0 521.6" fill="none" stroke="#f0e000" stroke-width="1.1"/>
<path d="M823.6 383.2 L758.5 285" stroke="#2a3fe8" stroke-width="1.1"/>
<path d="M765.5 289.0 L758.5 285 L759.5 293.0" fill="none" stroke="#2a3fe8" stroke-width="1.1"/>
<path d="M570.7 448.7 L569.8 321.5" stroke="#2a3fe8" stroke-width="1.1"/>
<path d="M573.2 328.2 L569.8 321.5 L566.5 328.2" fill="none" stroke="#2a3fe8" stroke-width="1.1"/>
<path d="M434 341.6 L436.4 333 L439.4 340.4 M496.3 335.5 L500.8 325.8 L504.8 337.3" fill="none" stroke="#2a3fe8" stroke-width="1.1"/>
<ellipse cx="377" cy="712" rx="24" ry="22" fill="none" stroke="#707070" stroke-width="3" opacity="0.35" filter="url(#blur2)"/>
<path d="M366 693 Q377 688 388 693" fill="none" stroke="#8a8a8a" stroke-width="1" stroke-dasharray="2 1.5"/>
<path d="M79 916 L144 934" stroke="#3a3a3a" stroke-width="1"/>
<path d="M757 427 L790 406" stroke="#1c1c1c" stroke-width="1"/>
<rect x="20.5" y="20.5" width="526" height="39" fill="#3b3b3b" stroke="#9c9c9c" stroke-width="1" />
<rect x="20.5" y="80.5" width="409" height="39" fill="#3b3b3b" stroke="#9c9c9c" stroke-width="1" />
<rect x="20.5" y="140.5" width="328" height="39" fill="#3b3b3b" stroke="#9c9c9c" stroke-width="1" />
<text x="33" y="44" font-size="12" fill="#f2f2f2" font-weight="bold" font-style="italic">Objects</text>
<text x="33" y="104" font-size="12" fill="#f2f2f2" font-weight="bold" font-style="italic">Field</text>
<text x="33" y="164" font-size="12" fill="#f2f2f2" font-weight="bold" font-style="italic">Déplacement</text>
<defs>
<radialGradient id="gSph" cx="0.35" cy="0.3" r="0.75"><stop offset="0" stop-color="#ffffff"/><stop offset="0.35" stop-color="#b8b8b8"/><stop offset="0.8" stop-color="#3a3a3a"/><stop offset="1" stop-color="#111"/></radialGradient>
<linearGradient id="gPlane" x1="0" y1="0" x2="1" y2="1"><stop offset="0" stop-color="#9a9a9a"/><stop offset="1" stop-color="#cfcfcf"/></linearGradient>
<linearGradient id="gCyl" x1="0" y1="0" x2="0.3" y2="1"><stop offset="0" stop-color="#f0f0f0"/><stop offset="0.45" stop-color="#a0a0a0"/><stop offset="1" stop-color="#2a2a2a"/></linearGradient>
<linearGradient id="gRod" x1="0" y1="0" x2="1" y2="0"><stop offset="0" stop-color="#dddddd"/><stop offset="0.5" stop-color="#888"/><stop offset="1" stop-color="#222"/></linearGradient>
<radialGradient id="gTer" cx="0.35" cy="0.6" r="0.5"><stop offset="0" stop-color="#ffffff"/><stop offset="1" stop-color="#8a8a8a"/></radialGradient>
<radialGradient id="gRock" cx="0.4" cy="0.35" r="0.7"><stop offset="0" stop-color="#b8b6b0"/><stop offset="0.6" stop-color="#7a7874"/><stop offset="1" stop-color="#202020"/></radialGradient>
<radialGradient id="gEarth" cx="0.4" cy="0.35" r="0.7"><stop offset="0" stop-color="#9fc4f0"/><stop offset="0.5" stop-color="#3a6fd0"/><stop offset="1" stop-color="#1a2f70"/></radialGradient>
<radialGradient id="gSun" cx="0.5" cy="0.5" r="0.5"><stop offset="0" stop-color="#ffffff"/><stop offset="0.45" stop-color="#fffbd0"/><stop offset="0.8" stop-color="#ffe030"/><stop offset="1" stop-color="#e0a000"/></radialGradient>
<radialGradient id="gSunGlow" cx="0.5" cy="0.5" r="0.5"><stop offset="0.6" stop-color="#e0b000" stop-opacity="0.5"/><stop offset="1" stop-color="#e0b000" stop-opacity="0"/></radialGradient>
<radialGradient id="gTeal" cx="0.5" cy="0.47" r="0.6"><stop offset="0" stop-color="#ffffff"/><stop offset="0.2" stop-color="#50f0d0"/><stop offset="0.6" stop-color="#1a7a60"/><stop offset="1" stop-color="#1f4f40"/></radialGradient>
<radialGradient id="gYel" cx="0.5" cy="0.5" r="0.5"><stop offset="0" stop-color="#ffff90"/><stop offset="0.5" stop-color="#e8c000"/><stop offset="1" stop-color="#e8c000" stop-opacity="0"/></radialGradient>
<radialGradient id="gTeal2" cx="0.5" cy="0.5" r="0.5"><stop offset="0" stop-color="#c0fff0"/><stop offset="0.5" stop-color="#20d0b0"/><stop offset="1" stop-color="#20d0b0" stop-opacity="0"/></radialGradient>
<radialGradient id="gCyan" cx="0.25" cy="0.62" r="0.6"><stop offset="0" stop-color="#40f0ff"/><stop offset="0.3" stop-color="#20b8d8"/><stop offset="1" stop-color="#1a5a70"/></radialGradient>
<radialGradient id="gWht" cx="0.78" cy="0.35" r="0.5"><stop offset="0" stop-color="#ffffff"/><stop offset="0.3" stop-color="#a0a0a0"/><stop offset="1" stop-color="#303436"/></radialGradient>
</defs>
<circle cx="113.8" cy="39.7" r="6.2" fill="url(#gSph)"/>
<line x1="152" y1="30" x2="152" y2="49" stroke="#8a8a8a" stroke-width="1.2"/>
<path d="M190 30 q-1.6 1.6 0 3.2 q1.6 1.6 0 3.2 q-1.6 1.6 0 3.2 q1.6 1.6 0 3.2 q-1.6 1.6 0 3.2 q1.6 1.6 0 3" fill="none" stroke="#a0a0a0" stroke-width="1"/>
<rect x="226" y="27" width="3.6" height="14" rx="1.8" fill="url(#gRod)"/>
<rect x="223.7" y="45.5" width="8.4" height="8.5" fill="url(#gRod)"/><ellipse cx="227.9" cy="45.5" rx="4.2" ry="1.6" fill="#e8e8e8"/>
<line x1="255.5" y1="28" x2="255.5" y2="53" stroke="#9a9a9a" stroke-width="1"/>
<line x1="422.5" y1="28" x2="422.5" y2="53" stroke="#9a9a9a" stroke-width="1"/>
<path d="M270 41.3 L279.1 34.9 L293.3 36.1 L290 43.9 Z" fill="url(#gPlane)"/><path d="M270 41.3 L290 43.9 L290 44.8 L270 42.2Z" fill="#555"/>
<g transform="rotate(22 320 40.3)"><rect x="308.5" y="36.6" width="22" height="7.4" rx="3.7" fill="url(#gCyl)"/><ellipse cx="329.5" cy="40.3" rx="2.2" ry="3.7" fill="#f4f4f4"/></g>
<rect x="344" y="35" width="28" height="18.5" fill="#676767"/>
<circle cx="360.8" cy="30.4" r="2.2" fill="url(#gSph)"/>
<circle cx="352.5" cy="39" r="2.3" fill="url(#gSph)"/>
<circle cx="363.7" cy="37" r="2" fill="url(#gSph)"/>
<path d="M384 33 L406 33.3 L407.7 45.8 L383 45.8 Z" fill="url(#gTer)"/><circle cx="393" cy="36.5" r="2" fill="#d8d8d8"/><ellipse cx="401" cy="37" rx="3" ry="2" fill="#555" opacity=".5"/>
<path d="M440.5 38 Q442 34.5 446 34.3 Q450 34 453 36 Q456 39 454.5 42 Q452 45.5 447 45 Q442 44.5 440.5 41Z" fill="url(#gRock)"/>
<circle cx="485.5" cy="39.6" r="8.2" fill="url(#gEarth)"/><path d="M480 36 q3 -3 7 -2 q-2 2 -5 3 Z M486 41 q4 -1 7 -4 q0 4 -4 5 Z M479 43 q3 0 5 1.5 q-3 0.5 -5 -1.5Z" fill="#e8f0ff" opacity=".8"/>
<circle cx="523.8" cy="40" r="13" fill="url(#gSunGlow)"/><circle cx="523.8" cy="40" r="10.7" fill="url(#gSun)"/>
<line x1="113.5" y1="91.5" x2="101.5" y2="93.8" stroke="#c8c8c8" stroke-width="1.2"/>
<path d="M101.99 93.71 L106.04 90.73 L106.86 94.97Z" fill="#c8c8c8"/>
<line x1="124" y1="93.2" x2="112" y2="95.5" stroke="#c8c8c8" stroke-width="1.2"/>
<path d="M112.49 95.41 L116.54 92.43 L117.36 96.67Z" fill="#c8c8c8"/>
<line x1="115" y1="99" x2="103" y2="101.5" stroke="#c8c8c8" stroke-width="1.2"/>
<path d="M103.49 101.40 L107.49 98.36 L108.37 102.59Z" fill="#c8c8c8"/>
<line x1="126" y1="100.2" x2="114" y2="102.8" stroke="#c8c8c8" stroke-width="1.2"/>
<path d="M114.49 102.69 L118.47 99.62 L119.38 103.84Z" fill="#c8c8c8"/>
<line x1="120" y1="106.2" x2="107.5" y2="109" stroke="#c8c8c8" stroke-width="1.2"/>
<path d="M107.99 108.89 L111.95 105.79 L112.89 110.01Z" fill="#c8c8c8"/>
<line x1="166" y1="89.2" x2="138" y2="95.5" stroke="#c8c8c8" stroke-width="1.3"/>
<path d="M148.99 92.99 L153.19 89.71 L154.19 94.16Z" fill="#c8c8c8"/>
<line x1="166" y1="96.5" x2="138" y2="103" stroke="#c8c8c8" stroke-width="1.3"/>
<path d="M144.99 101.39 L149.17 98.08 L150.20 102.52Z" fill="#c8c8c8"/>
<line x1="166" y1="104" x2="138" y2="110.5" stroke="#c8c8c8" stroke-width="1.3"/>
<path d="M152.49 107.19 L156.67 103.88 L157.70 108.32Z" fill="#c8c8c8"/>
<line x1="176" y1="94.5" x2="181.5" y2="113.5" stroke="#c4c4c4" stroke-width="1.1"/>
<line x1="187.5" y1="86" x2="196" y2="113.5" stroke="#c4c4c4" stroke-width="1.1"/>
<line x1="194.5" y1="86" x2="203" y2="113.5" stroke="#c4c4c4" stroke-width="1.1"/>
<line x1="198.5" y1="86" x2="204" y2="105" stroke="#c4c4c4" stroke-width="1.1"/>
<line x1="216.5" y1="88" x2="216.5" y2="113" stroke="#9a9a9a" stroke-width="1"/>
<line x1="382.5" y1="88" x2="382.5" y2="113" stroke="#9a9a9a" stroke-width="1"/>
<rect x="231" y="91.7" width="22.5" height="15" fill="url(#gTeal)" opacity="0.95"/>
<path d="M267 106.7 L273 101 L278.5 100 L281.2 90.2 L284 100 L290 101 L293.2 106.7 Z" fill="#9a9a9a" stroke="#cfcfcf" stroke-width="0.8"/>
<path d="M273 104 L291 104 M278 98 L284 98 M279.5 94 L283 94" stroke="#e0e0e0" stroke-width="0.6"/>
<rect x="306.7" y="92.5" width="23.3" height="14.2" fill="#243018"/><circle cx="313.8" cy="98.6" r="4" fill="url(#gYel)"/><circle cx="323.2" cy="99.5" r="3.6" fill="url(#gTeal2)"/>
<path d="M343.4 102 L353.2 91.5 L357 100 L369 102 L360.7 109 L357 100 Z" fill="#8c8c8c" stroke="#d0d0d0" stroke-width="0.8"/><path d="M344 102 L369 102" stroke="#e0e0e0" stroke-width="0.8"/>
<path d="M396 88 L411.5 88 L404 111.5 L396 111.5 Z" fill="url(#gCyan)"/><path d="M411.5 88 L420 88 L420 111.5 L404 111.5 Z" fill="url(#gWht)"/><line x1="412" y1="86" x2="404.2" y2="113.5" stroke="#0a1820" stroke-width="1.2"/>
<circle cx="139" cy="160" r="6.6" fill="#2e2e26" opacity=".6"/>
<circle cx="139" cy="160" r="6" fill="#fbfbee"/>
<path d="M133.8 162.6 A6 6 0 0 1 142 154.8" fill="none" stroke="#9a9684" stroke-width="1.1"/>
<text x="150" y="165" font-size="12.5" fill="#f0f0f0">XY</text>
<circle cx="187" cy="160" r="6.6" fill="#2e2e26" opacity=".6"/>
<circle cx="187" cy="160" r="6" fill="#fbfbee"/>
<path d="M181.8 162.6 A6 6 0 0 1 190 154.8" fill="none" stroke="#9a9684" stroke-width="1.1"/>
<text x="198" y="165" font-size="12.5" fill="#f0f0f0">XZ</text>
<circle cx="235" cy="160" r="6.6" fill="#2e2e26" opacity=".6"/>
<circle cx="235" cy="160" r="6" fill="#fbfbee"/>
<path d="M229.8 162.6 A6 6 0 0 1 238 154.8" fill="none" stroke="#9a9684" stroke-width="1.1"/>
<text x="246" y="165" font-size="12.5" fill="#f0f0f0">YZ</text>
<circle cx="299" cy="160" r="6.6" fill="#2e2e26" opacity=".6"/>
<circle cx="299" cy="160" r="6" fill="#fbfbee"/>
<path d="M293.8 162.6 A6 6 0 0 1 302 154.8" fill="none" stroke="#9a9684" stroke-width="1.1"/>
<circle cx="299" cy="160" r="2.5" fill="#111"/>
<text x="310" y="165" font-size="12.5" fill="#f0f0f0">XYZ</text>
<line x1="278.5" y1="147" x2="278.5" y2="173" stroke="#8a8a8a" stroke-width="1"/>
<rect x="1195.5" y="8.5" width="194" height="752" fill="#3a3a3a" stroke="#7e7e7e" stroke-width="1" />
<defs><linearGradient id="lg" x1="0" y1="0" x2="1" y2="1"><stop offset="0" stop-color="#a8e6a0"/><stop offset="0.45" stop-color="#5ccc6a"/><stop offset="1" stop-color="#12c455"/></linearGradient></defs>
<path d="M1212.6 18.3 L1224 22.6 Q1226 23.6 1225.8 25.6 L1222.8 37 Q1221.8 39.8 1219 39.8 L1216 39.8 L1209.2 35.8 L1210.8 25 Z M1215.4 26 L1219.4 28.9 L1218.3 33.4 L1214 32.3 Z" fill="url(#lg)" fill-rule="evenodd"/>
<text x="1237" y="35" font-size="12" fill="#f4f4f4" font-weight="bold" textLength="58" lengthAdjust="spacingAndGlyphs">DYNAMICS</text>
<rect x="1204.5" y="52.5" width="56" height="21" fill="#3a3a3a" stroke="#868686" stroke-width="1" />
<text x="1232.5" y="67" font-size="10.5" fill="#f2f2f2" text-anchor="middle">Objects</text>
<rect x="1264.5" y="52.5" width="56" height="21" fill="#3a3a3a" stroke="#868686" stroke-width="1" />
<text x="1292.5" y="67" font-size="10.5" fill="#f2f2f2" text-anchor="middle">Fields</text>
<rect x="1324.5" y="52.5" width="56" height="21" fill="#3a3a3a" stroke="#868686" stroke-width="1" />
<text x="1352.5" y="67" font-size="10.5" fill="#f2f2f2" text-anchor="middle">Display</text>
<rect x="1204.5" y="77.5" width="56" height="21" fill="#3a3a3a" stroke="#5e5e5e" stroke-width="1" />
<text x="1232.5" y="92" font-size="10.5" fill="#6c6c6c" text-anchor="middle">Simulation</text>
<rect x="1264.5" y="77.5" width="56" height="21" fill="#3a3a3a" stroke="#868686" stroke-width="1" />
<text x="1292.5" y="92" font-size="10.5" fill="#f2f2f2" text-anchor="middle">Physics</text>
<rect x="1324.5" y="77.5" width="56" height="21" fill="#3a3a3a" stroke="#868686" stroke-width="1" />
<text x="1352.5" y="92" font-size="10.5" fill="#f2f2f2" text-anchor="middle">Scene</text>
<rect x="1204.5" y="116.5" width="176" height="208" fill="none" stroke="#868686" stroke-width="1" />
<rect x="1212" y="110" width="60" height="12" fill="#3a3a3a" />
<text x="1216" y="119" font-size="11" fill="#dfe9f3" font-weight="bold">Simulator</text>
<rect x="1212" y="134" width="13" height="13" fill="#fbfbf2" />
<rect x="1212" y="134" width="13" height="1" fill="#8f8c78" />
<rect x="1212" y="134" width="1" height="13" fill="#8f8c78" />
<rect x="1213" y="135" width="11" height="1" fill="#cfccb8" />
<rect x="1213" y="135" width="1" height="11" fill="#cfccb8" />
<path d="M1215 140.2 L1217.2 142.6 L1222 137.6" fill="none" stroke="#111" stroke-width="2.1" stroke-linecap="square"/>
<text x="1230" y="144" font-size="10.5" fill="#f0f0f0">Inertie</text>
<rect x="1212" y="158" width="13" height="13" fill="#fbfbf2" />
<rect x="1212" y="158" width="13" height="1" fill="#8f8c78" />
<rect x="1212" y="158" width="1" height="13" fill="#8f8c78" />
<rect x="1213" y="159" width="11" height="1" fill="#cfccb8" />
<rect x="1213" y="159" width="1" height="11" fill="#cfccb8" />
<text x="1230" y="168" font-size="10.5" fill="#f0f0f0">FSS Energy control</text>
<text x="1212" y="191" font-size="10.5" fill="#f0f0f0">Speed :</text>
<line x1="1268" y1="187.5" x2="1365" y2="187.5" stroke="#8a8a8a" stroke-width="1"/>
<rect x="1276.5" y="179.5" width="7" height="16" fill="#3a3a3a" stroke="#8a8a8a" stroke-width="1" />
<text x="1212" y="215" font-size="10.5" fill="#f0f0f0">Simulation step :</text>
<text x="1212" y="231" font-size="10.5" fill="#f0f0f0">0.01</text>
<text x="1212" y="255" font-size="10.5" fill="#f0f0f0">Temps écoulé [s] :  3.810</text>
<rect x="1212" y="271" width="13" height="13" fill="#fbfbf2" />
<rect x="1212" y="271" width="13" height="1" fill="#8f8c78" />
<rect x="1212" y="271" width="1" height="13" fill="#8f8c78" />
<rect x="1213" y="272" width="11" height="1" fill="#cfccb8" />
<rect x="1213" y="272" width="1" height="11" fill="#cfccb8" />
<text x="1230" y="281" font-size="10.5" fill="#f0f0f0">Activate simulation</text>
<line x1="1230" y1="282.5" x2="1318" y2="282.5" stroke="#e8e8e8" stroke-width="1"/>
<rect x="1212.5" y="297.5" width="160" height="21" fill="#3a3a3a" stroke="#868686" stroke-width="1" />
<text x="1292.5" y="312" font-size="10.5" fill="#f2f2f2" text-anchor="middle">Reset</text>
<rect x="1204.5" y="340.5" width="176" height="144" fill="none" stroke="#868686" stroke-width="1" />
<rect x="1212" y="334" width="58" height="12" fill="#3a3a3a" />
<text x="1216" y="343" font-size="11" fill="#dfe9f3" font-weight="bold">Universe</text>
<text x="1212" y="367" font-size="10.5" fill="#f0f0f0">Dimension :</text>
<circle cx="1219" cy="388" r="7.3" fill="#5a584a" opacity="0.55"/>
<circle cx="1219" cy="388" r="6" fill="#fbfbee" stroke="#8c8870" stroke-width="0.8"/>
<text x="1230" y="392" font-size="10.5" fill="#f0f0f0">XY</text>
<circle cx="1259" cy="388" r="7.3" fill="#5a584a" opacity="0.55"/>
<circle cx="1259" cy="388" r="6" fill="#fbfbee" stroke="#8c8870" stroke-width="0.8"/>
<text x="1270" y="392" font-size="10.5" fill="#f0f0f0">XZ</text>
<circle cx="1299" cy="388" r="7.3" fill="#5a584a" opacity="0.55"/>
<circle cx="1299" cy="388" r="6" fill="#fbfbee" stroke="#8c8870" stroke-width="0.8"/>
<text x="1310" y="392" font-size="10.5" fill="#f0f0f0">YZ</text>
<circle cx="1339" cy="388" r="7.3" fill="#5a584a" opacity="0.55"/>
<circle cx="1339" cy="388" r="6" fill="#fbfbee" stroke="#8c8870" stroke-width="0.8"/>
<circle cx="1339" cy="388" r="2.4" fill="#111"/>
<text x="1350" y="392" font-size="10.5" fill="#f0f0f0">XYZ</text>
<circle cx="1219" cy="412" r="7.3" fill="#5a584a" opacity="0.55"/>
<circle cx="1219" cy="412" r="6" fill="#fbfbee" stroke="#8c8870" stroke-width="0.8"/>
<text x="1230" y="416" font-size="10.5" fill="#f0f0f0">X</text>
<circle cx="1259" cy="412" r="7.3" fill="#5a584a" opacity="0.55"/>
<circle cx="1259" cy="412" r="6" fill="#fbfbee" stroke="#8c8870" stroke-width="0.8"/>
<text x="1270" y="416" font-size="10.5" fill="#f0f0f0">Y</text>
<circle cx="1299" cy="412" r="7.3" fill="#5a584a" opacity="0.55"/>
<circle cx="1299" cy="412" r="6" fill="#fbfbee" stroke="#8c8870" stroke-width="0.8"/>
<text x="1310" y="416" font-size="10.5" fill="#f0f0f0">Z</text>
<text x="1212" y="447" font-size="10.5" fill="#f0f0f0">Limit area :</text>
<line x1="1220" y1="467.5" x2="1365" y2="467.5" stroke="#8a8a8a" stroke-width="1"/>
<rect x="1228.5" y="459.5" width="7" height="16" fill="#3a3a3a" stroke="#8a8a8a" stroke-width="1" />
<rect x="1204.5" y="500.5" width="176" height="40" fill="none" stroke="#868686" stroke-width="1" />
<rect x="1212" y="494" width="38" height="12" fill="#3a3a3a" />
<text x="1216" y="503" font-size="11" fill="#dfe9f3" font-weight="bold">Tools</text>
<rect x="1212.5" y="513.5" width="160" height="21" fill="#3a3a3a" stroke="#868686" stroke-width="1" />
<text x="1292.5" y="528" font-size="10.5" fill="#f2f2f2" text-anchor="middle" textLength="115" lengthAdjust="spacingAndGlyphs">View mechanical energy</text>
<rect x="1204.5" y="556.5" width="176" height="136" fill="none" stroke="#868686" stroke-width="1" />
<rect x="1212" y="550" width="52" height="12" fill="#3a3a3a" />
<text x="1216" y="559" font-size="11" fill="#dfe9f3" font-weight="bold">Display</text>
<rect x="1212" y="574" width="13" height="13" fill="#fbfbf2" />
<rect x="1212" y="574" width="13" height="1" fill="#8f8c78" />
<rect x="1212" y="574" width="1" height="13" fill="#8f8c78" />
<rect x="1213" y="575" width="11" height="1" fill="#cfccb8" />
<rect x="1213" y="575" width="1" height="11" fill="#cfccb8" />
<path d="M1215 580.2 L1217.2 582.6 L1222 577.6" fill="none" stroke="#111" stroke-width="2.1" stroke-linecap="square"/>
<text x="1230" y="584" font-size="10.5" fill="#f0f0f0">Normal forces</text>
<rect x="1212" y="598" width="13" height="13" fill="#fbfbf2" />
<rect x="1212" y="598" width="13" height="1" fill="#8f8c78" />
<rect x="1212" y="598" width="1" height="13" fill="#8f8c78" />
<rect x="1213" y="599" width="11" height="1" fill="#cfccb8" />
<rect x="1213" y="599" width="1" height="11" fill="#cfccb8" />
<path d="M1215 604.2 L1217.2 606.6 L1222 601.6" fill="none" stroke="#111" stroke-width="2.1" stroke-linecap="square"/>
<text x="1230" y="608" font-size="10.5" fill="#f0f0f0">Tension forces</text>
<rect x="1212" y="622" width="13" height="13" fill="#fbfbf2" />
<rect x="1212" y="622" width="13" height="1" fill="#8f8c78" />
<rect x="1212" y="622" width="1" height="13" fill="#8f8c78" />
<rect x="1213" y="623" width="11" height="1" fill="#cfccb8" />
<rect x="1213" y="623" width="1" height="11" fill="#cfccb8" />
<text x="1230" y="632" font-size="10.5" fill="#f0f0f0">Rub forces</text>
<rect x="1212" y="646" width="13" height="13" fill="#fbfbf2" />
<rect x="1212" y="646" width="13" height="1" fill="#8f8c78" />
<rect x="1212" y="646" width="1" height="13" fill="#8f8c78" />
<rect x="1213" y="647" width="11" height="1" fill="#cfccb8" />
<rect x="1213" y="647" width="1" height="11" fill="#cfccb8" />
<path d="M1215 652.2 L1217.2 654.6 L1222 649.6" fill="none" stroke="#111" stroke-width="2.1" stroke-linecap="square"/>
<text x="1230" y="656" font-size="10.5" fill="#f0f0f0">Gravitation forces</text>
<rect x="1212" y="670" width="13" height="13" fill="#fbfbf2" />
<rect x="1212" y="670" width="13" height="1" fill="#8f8c78" />
<rect x="1212" y="670" width="1" height="13" fill="#8f8c78" />
<rect x="1213" y="671" width="11" height="1" fill="#cfccb8" />
<rect x="1213" y="671" width="1" height="11" fill="#cfccb8" />
<path d="M1215 676.2 L1217.2 678.6 L1222 673.6" fill="none" stroke="#111" stroke-width="2.1" stroke-linecap="square"/>
<text x="1230" y="680" font-size="10.5" fill="#f0f0f0">Σ Forces</text>
<rect x="1332.5" y="665.5" width="40" height="21" fill="#3a3a3a" stroke="#868686" stroke-width="1" />
<text x="1352.5" y="680" font-size="10.5" fill="#f2f2f2" text-anchor="middle">Scale</text>
<rect x="1204.5" y="707.5" width="176" height="21" fill="#3a3a3a" stroke="#868686" stroke-width="1" />
<text x="1292.5" y="722" font-size="10.5" fill="#f2f2f2" text-anchor="middle">Reset</text>
<rect x="1204.5" y="731.5" width="176" height="21" fill="#3a3a3a" stroke="#868686" stroke-width="1" />
<text x="1292.5" y="746" font-size="10.5" fill="#f2f2f2" text-anchor="middle">Back to preview menu</text>
<rect x="258.5" y="694.5" width="418" height="254" fill="#3a3a3a" stroke="#a2a2a2" stroke-width="1" />
<text x="266" y="712" font-size="11.5" fill="#eef3f8" font-weight="bold">Integral</text>
<path d="M657.5 704 L664.5 711 M664.5 704 L657.5 711" stroke="#f4f4f4" stroke-width="1.7"/>
<line x1="266" y1="720.5" x2="670" y2="720.5" stroke="#8e8e8e" stroke-width="1"/>
<path d="M274.5 932 L290.2 932.0 C293.6 930.7 296.5 927.8 300.3 924.1 C304.1 920.5 308.7 915.5 312.9 910.0 C317.0 904.5 321.8 896.9 325.4 891.1 C329.1 885.4 330.7 882.8 334.9 875.4 C339.0 868.1 344.8 856.3 350.6 847.1 C356.3 838.0 363.1 828.8 369.4 820.4 C375.7 812.0 382.0 804.2 388.3 796.9 C394.6 789.5 400.8 782.4 407.1 776.4 C413.4 770.4 419.7 765.2 426.0 760.7 C432.3 756.3 438.6 752.6 444.8 749.7 C451.1 746.8 457.4 744.7 463.7 743.4 C470.0 742.1 476.3 741.7 482.6 741.9 C488.8 742.0 495.1 742.7 501.4 744.1 C507.7 745.4 514.0 747.2 520.3 749.7 C526.6 752.2 532.8 755.4 539.1 759.1 C545.4 762.9 551.7 766.8 558.0 772.3 C564.3 777.8 569.9 784.6 576.8 792.1 C583.8 799.6 595.7 813.1 599.5 817.3" fill="none" stroke="#1a9a1a" stroke-width="1.05"/>
<rect x="694.5" y="645.5" width="462" height="331" fill="#3a3a3a" stroke="#a2a2a2" stroke-width="1" />
<text x="702" y="664" font-size="11.5" fill="#eef3f8" font-weight="bold">Graph (Object 2)</text>
<path d="M1137.5 656 L1144.5 663 M1144.5 656 L1137.5 663" stroke="#f4f4f4" stroke-width="1.7"/>
<line x1="702" y1="672.5" x2="1150" y2="672.5" stroke="#8e8e8e" stroke-width="1"/>
<circle cx="717" cy="693" r="7" fill="#26261e" opacity=".45"/>
<circle cx="717" cy="693" r="6" fill="#fbfbee"/>
<path d="M711.8 695.6 A6 6 0 0 1 720 687.8" fill="none" stroke="#9a9684" stroke-width="1.1"/>
<circle cx="717" cy="693" r="2.5" fill="#111"/>
<text x="729" y="697" font-size="10.5" fill="#f0f0f0">Motion</text>
<circle cx="781" cy="693" r="7" fill="#26261e" opacity=".45"/>
<circle cx="781" cy="693" r="6" fill="#fbfbee"/>
<path d="M775.8 695.6 A6 6 0 0 1 784 687.8" fill="none" stroke="#9a9684" stroke-width="1.1"/>
<text x="793" y="697" font-size="10.5" fill="#f0f0f0">Energy</text>
<circle cx="914" cy="693" r="7" fill="#26261e" opacity=".45"/>
<circle cx="914" cy="693" r="6" fill="#fbfbee"/>
<path d="M908.8 695.6 A6 6 0 0 1 917 687.8" fill="none" stroke="#9a9684" stroke-width="1.1"/>
<text x="926" y="697" font-size="10.5" fill="#f0f0f0">Position</text>
<circle cx="994" cy="693" r="7" fill="#26261e" opacity=".45"/>
<circle cx="994" cy="693" r="6" fill="#fbfbee"/>
<path d="M988.8 695.6 A6 6 0 0 1 997 687.8" fill="none" stroke="#9a9684" stroke-width="1.1"/>
<circle cx="994" cy="693" r="2.5" fill="#111"/>
<text x="1006" y="697" font-size="10.5" fill="#f0f0f0">Velocity</text>
<circle cx="1074" cy="693" r="7" fill="#26261e" opacity=".45"/>
<circle cx="1074" cy="693" r="6" fill="#fbfbee"/>
<path d="M1068.8 695.6 A6 6 0 0 1 1077 687.8" fill="none" stroke="#9a9684" stroke-width="1.1"/>
<text x="1086" y="697" font-size="10.5" fill="#f0f0f0">Acceleration</text>
<line x1="710" y1="711.5" x2="1141" y2="711.5" stroke="#8e8e8e" stroke-width="1"/>
<defs><pattern id="gstripe" x="0" y="0" width="2" height="4" patternUnits="userSpaceOnUse"><rect width="2" height="4" fill="#2b4a2b"/><rect x="1" width="1" height="4" fill="#1ea01e"/></pattern></defs>
<polygon points="731,817.5 725,817.5 730,805 735,790 741,777 748,762 755,747 761,739 769,731.5 775,730.5 780,731.5 787,736 795,740 800,743.5 925,817.5" fill="url(#gstripe)"/>
<polygon points="925,817.5 946,829.5 946,827 950,829.7 1043.7,883.5 1043.7,817.5" fill="url(#gstripe)"/>
<line x1="718" y1="817.5" x2="1105" y2="817.5" stroke="#9a9a9a" stroke-width="1"/>
<line x1="1043.5" y1="721" x2="1043.5" y2="920" stroke="#9a9a9a" stroke-width="1"/>
<polyline points="725,817.5 730,805 735,790 741,777 748,762 755,747 761,739 769,731.5 775,730.5 780,731.5 787,736 795,740 800,743.5 946,829.5 946.5,826.5 950,829.7 1043.7,883.5 1105,919.6" fill="none" stroke="#0c1a9a" stroke-width="1.3"/>
<text x="1109" y="732" font-size="10.5" fill="#f0f0f0">1.5E1</text>
<text x="1107" y="920" font-size="10.5" fill="#f0f0f0">-1.7E1</text>
<line x1="710" y1="930.5" x2="1141" y2="930.5" stroke="#8e8e8e" stroke-width="1"/>
<rect x="710.5" y="943.5" width="80" height="21" fill="#3a3a3a" stroke="#868686" stroke-width="1" />
<text x="750.5" y="958" font-size="10.5" fill="#f2f2f2" text-anchor="middle">Export...</text>
<rect x="798.5" y="943.5" width="80" height="21" fill="#3a3a3a" stroke="#868686" stroke-width="1" />
<text x="838.5" y="958" font-size="10.5" fill="#f2f2f2" text-anchor="middle">Clear</text>
<rect x="1060.5" y="943.5" width="80" height="21" fill="#3a3a3a" stroke="#868686" stroke-width="1" />
<text x="1100.5" y="958" font-size="10.5" fill="#f2f2f2" text-anchor="middle">OK</text>
<defs><filter id="blur3" x="-10%" y="-10%" width="120%" height="120%"><feGaussianBlur stdDeviation="2"/></filter></defs><rect x="827" y="880" width="181" height="139" fill="#fffff0" opacity="0.1" filter="url(#blur3)"/>
<rect x="829.5" y="882.5" width="176" height="134" fill="#fefefa" stroke="#b8b4a4" stroke-width="1" />
<text x="848" y="897" font-size="11" fill="#1a1a1a">Export...</text>
<line x1="833" y1="905.5" x2="1002" y2="905.5" stroke="#c4c0b0" stroke-width="1"/>
<text x="848" y="923" font-size="11" fill="#1a1a1a">Trace derive...</text>
<rect x="832.5" y="928.5" width="170" height="16" fill="#3d7ad8" stroke="#2a4f9a" stroke-width="1" />
<text x="848" y="940" font-size="11" fill="#ffffff">Trace integral...</text>
<path d="M836.5 937.2 L839.2 940.2 L843.5 934" fill="none" stroke="#fff" stroke-width="1.9"/>
<text x="848" y="957" font-size="11" fill="#1a1a1a" textLength="133" lengthAdjust="spacingAndGlyphs">Ramener les axes à l'origine</text>
<path d="M836.5 954 L839.2 957 L843.5 950.8" fill="none" stroke="#111" stroke-width="1.9"/>
<line x1="833" y1="965.5" x2="1002" y2="965.5" stroke="#c4c0b0" stroke-width="1"/>
<text x="848" y="983" font-size="11" fill="#1a1a1a">Update frequency</text>
<path d="M993 975.5 L997 979 L993 982.5 Z" fill="#111"/>
<line x1="833" y1="991.5" x2="1002" y2="991.5" stroke="#c4c0b0" stroke-width="1"/>
<text x="848" y="1009" font-size="11" fill="#1a1a1a">Clear</text>
</svg>
</body></html>
